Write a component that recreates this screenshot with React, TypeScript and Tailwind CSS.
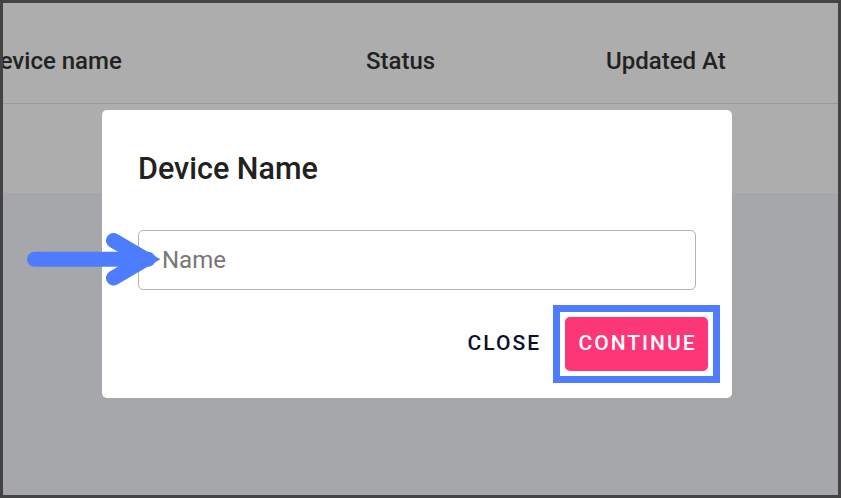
import React from "react";

export default function App() {
  return (
    <div className="relative w-[841px] h-[498px] overflow-hidden border-[3px] border-[#434343] bg-[#a6a7aa] font-['Roboto','Liberation_Sans',sans-serif]">
      <div className="h-[101px] border-b border-[#999999] bg-[#adadad] flex items-start pt-[44px] text-[24px] leading-[28px] font-medium text-[#222222] whitespace-nowrap">
        <span className="-ml-[19px] w-[382px] shrink-0">Device name</span>
        <span className="w-[240px] shrink-0">Status</span>
        <span className="shrink-0">Updated At</span>
      </div>
      <div className="h-[89px] bg-[#adadad]" />

      <div className="absolute left-[99px] top-[107px] w-[630px] bg-white rounded-[5px] pt-[41px] px-[36px] pb-[15px] flex flex-col">
        <div className="text-[30.5px] leading-[36px] font-medium text-[#212121]">Device Name</div>
        <input
          placeholder="Name"
          className="mt-[43px] h-[60px] w-full border border-[#b3b3b3] rounded-[5px] pl-[23px] text-[24px] text-[#212121] placeholder:text-[#777777] outline-none"
        />
        <div className="mt-[15px] -mr-[24px] flex justify-end items-center">
          <span className="mr-[12px] text-[21px] font-medium tracking-[2px] text-[#0c0e2c]">CLOSE</span>
          <div className="border-[7px] border-[#4d7cfe] p-[5px] bg-white">
            <div className="w-[143px] h-[54px] rounded-[5px] bg-[#fd3677] text-white text-[21px] font-medium tracking-[2px] pl-[2px] flex items-center justify-center">
              CONTINUE
            </div>
          </div>
        </div>
      </div>

      <svg
        className="absolute left-[17px] top-[222px]"
        width="150"
        height="70"
        viewBox="20 225 150 70"
      >
        <line x1="34.5" y1="259.2" x2="148" y2="259.2" stroke="#4d7cfe" strokeWidth="15" strokeLinecap="round" />
        <polyline
          points="113.5,240.5 145.5,259.2 113.5,278"
          fill="none"
          stroke="#4d7cfe"
          strokeWidth="15"
          strokeLinecap="round"
          strokeLinejoin="miter"
        />
      </svg>
    </div>
  );
}
